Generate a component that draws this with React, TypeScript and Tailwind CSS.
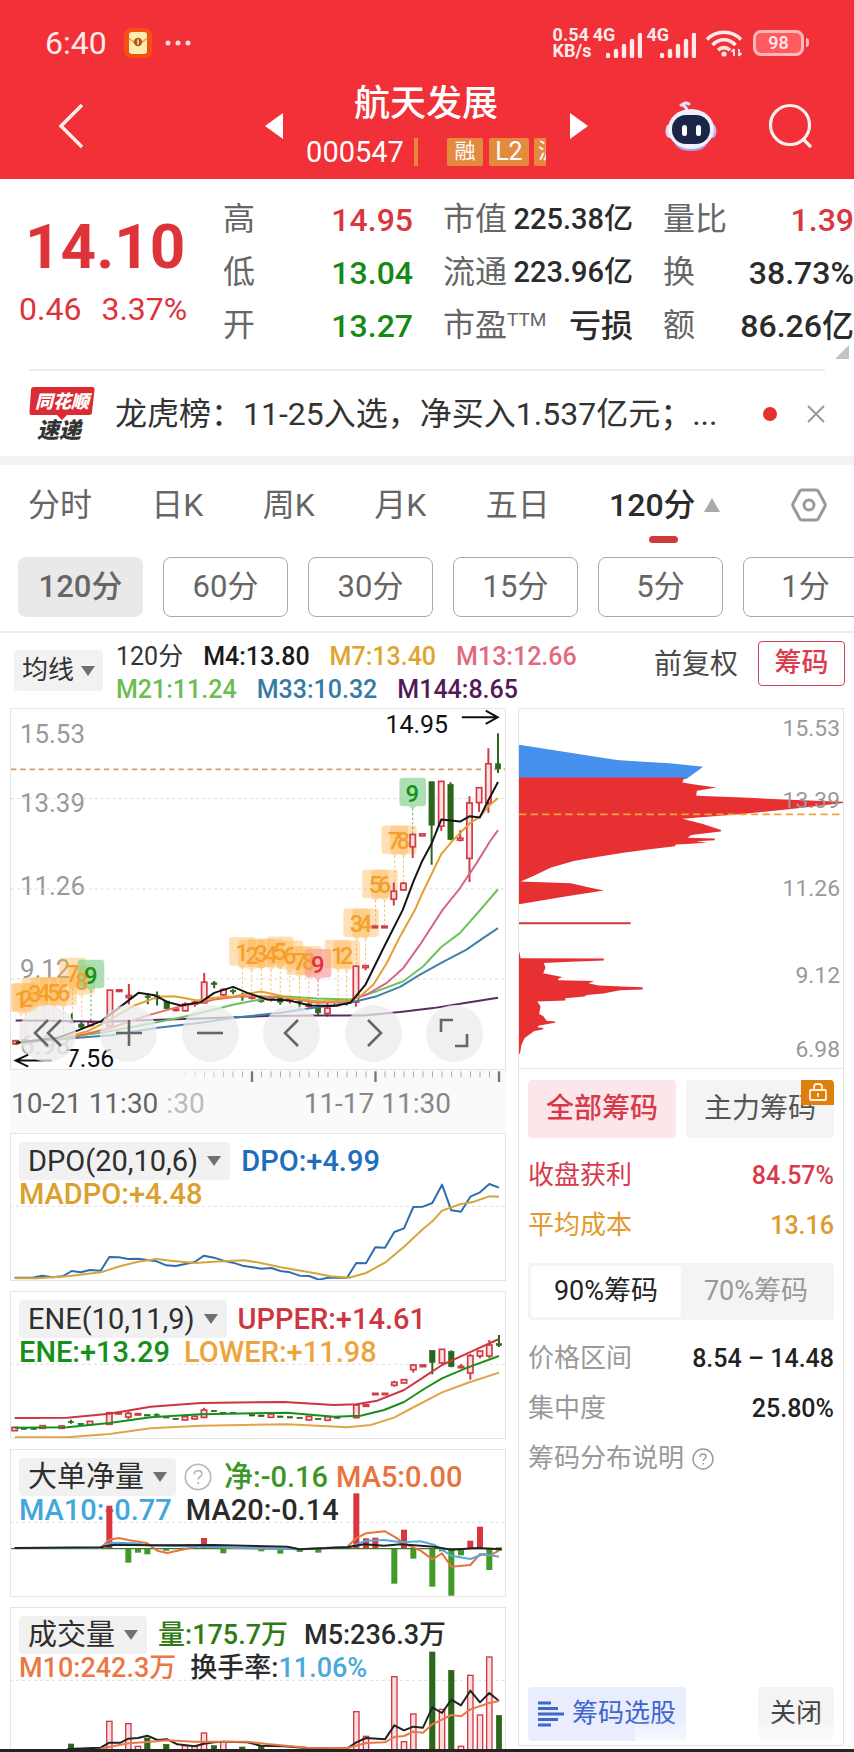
import { ReactNode } from "react";
import clsx from "clsx";

type Candle = {
  x: number;
  high: number;
  low: number;
  top: number;
  bottom: number;
  up: boolean;
};

const c = (
  x: number,
  high: number,
  low: number,
  top: number,
  bottom: number,
  up = true
): Candle => ({ x, high, low, top, bottom, up });

const RED = "#d23a44";
const GREEN = "#2b661c";

const candles: Candle[] = [
  c(42, 1022, 1036, 1024, 1034),
  c(70, 1018, 1030, 1022, 1028),
  c(211, 942, 972, 966, 970, false),
  c(240, 968, 990, 974, 984, false),
  c(268, 960, 982, 968, 978),
  c(326, 872, 980, 872, 980),
  c(354, 871, 876, 871, 876),
  c(383, 853, 915, 888, 894),
  c(440, 882, 914, 890, 894, false),
  c(468, 876, 918, 888, 898, false),
  c(497, 905, 928, 905, 928, false),
  c(525, 928, 936, 929, 933),
  c(553, 908, 936, 914, 934),
  c(582, 904, 922, 908, 914),
  c(610, 820, 912, 848, 910),
  c(640, 844, 866, 850, 855, false),
  c(668, 866, 890, 870, 886),
  c(697, 868, 884, 873, 877, false),
  c(725, 880, 904, 890, 892, false),
  c(754, 886, 900, 892, 896),
  c(782, 888, 910, 898, 906, false),
  c(811, 890, 906, 896, 900),
  c(839, 886, 916, 892, 908, false),
  c(868, 892, 912, 900, 904),
  c(897, 896, 934, 906, 908, false),
  c(925, 900, 926, 914, 920),
  c(953, 918, 950, 926, 940, false),
  c(981, 906, 952, 926, 942),
  c(1010, 902, 922, 908, 918),
  c(1039, 898, 918, 906, 910, false),
  c(1067, 798, 922, 800, 908),
  c(1096, 796, 812, 798, 804),
  c(1124, 679, 684, 679, 684),
  c(1153, 679, 684, 679, 684),
  c(1181, 548, 617, 574, 598),
  c(1210, 546, 572, 550, 570),
  c(1238, 403, 474, 403, 440),
  c(1267, 401, 407, 401, 407),
  c(1295, 244, 494, 244, 375, false),
  c(1324, 243, 392, 243, 378),
  c(1352, 246, 420, 252, 418, false),
  c(1381, 390, 424, 414, 420),
  c(1409, 288, 546, 308, 475),
  c(1438, 262, 335, 262, 307),
  c(1466, 143, 338, 190, 308),
  c(1495, 98, 218, 190, 205, false),
];

const eneCandles: Candle[] = [
  c(42, 427, 437, 427, 437),
  c(70, 429, 433, 429, 433, false),
  c(99, 429, 433, 429, 433, false),
  c(126, 422, 430, 422, 430),
  c(183, 423, 430, 423, 430),
  c(211, 404, 416, 410, 413, false),
  c(240, 415, 419, 415, 419, false),
  c(268, 409, 419, 409, 419),
  c(326, 383, 418, 383, 418),
  c(354, 383, 387, 383, 387),
  c(383, 378, 403, 385, 396),
  c(412, 386, 390, 386, 390),
  c(440, 389, 393, 389, 393, false),
  c(468, 385, 395, 389, 391, false),
  c(497, 395, 399, 395, 399, false),
  c(525, 400, 404, 400, 404, false),
  c(553, 395, 405, 395, 405),
  c(582, 394, 404, 394, 402),
  c(610, 368, 400, 375, 397),
  c(640, 376, 380, 376, 380, false),
  c(668, 382, 387, 382, 387, false),
  c(697, 382, 386, 382, 386, false),
  c(754, 388, 393, 388, 393, false),
  c(782, 390, 395, 390, 395, false),
  c(811, 387, 397, 387, 397),
  c(839, 393, 397, 393, 397, false),
  c(868, 395, 399, 395, 399, false),
  c(897, 397, 401, 397, 401, false),
  c(925, 394, 405, 394, 405),
  c(953, 400, 404, 400, 404, false),
  c(981, 395, 406, 395, 406),
  c(1010, 395, 400, 395, 400, false),
  c(1067, 357, 400, 360, 398),
  c(1096, 359, 364, 359, 364),
  c(1124, 325, 329, 325, 329),
  c(1153, 325, 329, 325, 329),
  c(1181, 287, 305, 292, 301),
  c(1210, 284, 294, 284, 294),
  c(1238, 240, 263, 240, 254),
  c(1267, 240, 245, 240, 245),
  c(1295, 196, 268, 196, 232, false),
  c(1324, 193, 236, 193, 234),
  c(1352, 196, 247, 200, 245, false),
  c(1381, 237, 250, 244, 248),
  c(1409, 207, 284, 212, 264),
  c(1438, 198, 220, 198, 213),
  c(1466, 165, 220, 180, 213),
  c(1495, 150, 186, 176, 181, false),
];

const maLines = [
  { color: "#5b2a66", points: "42,963 150,964 300,967 450,962 600,957 800,950 950,948 1090,948 1200,938 1300,926 1400,910 1495,895" },
  { color: "#3f80ad", points: "42,1030 130,1024 230,1015 330,1008 470,985 600,970 700,955 840,940 940,925 1040,912 1130,890 1200,862 1260,825 1324,790 1400,750 1450,715 1495,685" },
  { color: "#6cc25b", points: "42,1030 150,1018 300,1000 460,970 560,950 700,915 780,900 840,890 950,897 1050,900 1130,875 1210,845 1270,800 1324,742 1380,700 1440,632 1495,568" },
  { color: "#d9648a", points: "950,908 1040,905 1100,885 1160,850 1210,805 1260,735 1328,630 1380,565 1430,490 1470,425 1495,390" },
  { color: "#ec6a5e", points: "42,1030 150,1022 230,1010 330,985 440,948 540,920 610,908 640,900 720,890 840,892 950,910 1040,907" },
  { color: "#e0a22e", points: "42,1030 200,1012 260,995 310,970 400,918 470,892 520,890 590,903 640,895 700,890 780,876 820,884 860,895 950,905 1040,905 1080,890 1120,855 1160,790 1200,710 1245,630 1267,580 1324,462 1360,420 1409,370 1440,350 1466,318 1495,293" },
  { color: "#151515", points: "42,1030 170,1015 230,993 300,965 360,920 412,880 460,887 500,908 540,918 600,908 640,880 697,862 740,880 800,900 860,902 930,918 1000,920 1050,910 1067,890 1096,855 1150,745 1208,630 1240,545 1267,482 1295,430 1324,358 1381,364 1410,348 1440,352 1466,300 1495,245" },
];

type Badge = { n: number; x: number; y: number; end: number; tone?: "green" | "red" };

const badges: Badge[] = [
  { n: 1, x: 58, y: 900, end: 1020 },
  { n: 2, x: 72, y: 898, end: 1020 },
  { n: 3, x: 100, y: 882, end: 1010 },
  { n: 4, x: 127, y: 880, end: 1010 },
  { n: 5, x: 156, y: 880, end: 1005 },
  { n: 6, x: 186, y: 880, end: 1005 },
  { n: 7, x: 213, y: 822, end: 945 },
  { n: 8, x: 241, y: 846, end: 970 },
  { n: 9, x: 269, y: 828, end: 960, tone: "green" },
  { n: 1, x: 725, y: 760, end: 880 },
  { n: 2, x: 753, y: 768, end: 886 },
  { n: 3, x: 782, y: 764, end: 888 },
  { n: 4, x: 811, y: 766, end: 890 },
  { n: 5, x: 839, y: 758, end: 886 },
  { n: 6, x: 868, y: 770, end: 892 },
  { n: 7, x: 897, y: 788, end: 896 },
  { n: 8, x: 925, y: 788, end: 900 },
  { n: 9, x: 953, y: 796, end: 918, tone: "red" },
  { n: 1, x: 1013, y: 768, end: 902 },
  { n: 2, x: 1039, y: 770, end: 898 },
  { n: 3, x: 1069, y: 674, end: 798 },
  { n: 4, x: 1096, y: 674, end: 796 },
  { n: 5, x: 1126, y: 557, end: 679 },
  { n: 6, x: 1153, y: 557, end: 679 },
  { n: 7, x: 1184, y: 424, end: 548 },
  { n: 8, x: 1210, y: 424, end: 546 },
  { n: 9, x: 1238, y: 280, end: 403, tone: "green" },
];

const netBars = [
  [326, 195, 323], [383, 323, 366], [412, 323, 336], [440, 323, 341], [497, 323, 330],
  [610, 292, 323], [668, 323, 338], [782, 323, 332], [839, 323, 339], [897, 323, 334],
  [953, 323, 336], [1067, 158, 323], [1096, 293, 323], [1124, 291, 323], [1181, 323, 429],
  [1210, 267, 323], [1238, 323, 354], [1295, 323, 438], [1324, 323, 332], [1352, 323, 465],
  [1381, 323, 344], [1409, 300, 323], [1438, 258, 323], [1466, 323, 388], [1495, 320, 330],
];

const volumeBars: [number, number, boolean][] = [
  [211, 429, false], [326, 361, true], [383, 368, true], [412, 436, true], [440, 411, false],
  [497, 430, false], [553, 434, true], [582, 436, true], [610, 396, true], [640, 434, false],
  [668, 424, true], [725, 438, false], [782, 436, false], [1067, 332, true], [1096, 406, true],
  [1181, 227, true], [1210, 422, true], [1238, 339, true], [1295, 153, false], [1324, 325, true],
  [1352, 208, false], [1381, 436, true], [1409, 223, true], [1438, 342, true], [1466, 168, true],
  [1495, 343, false],
];

const quote = [
  [
    { label: "高", value: "14.95", color: "text-[#d9363e]" },
    { label: "低", value: "13.04", color: "text-[#148a14]" },
    { label: "开", value: "13.27", color: "text-[#148a14]" },
  ],
  [
    { label: "市值", value: "225.38亿", color: "text-[#2b2b2b]" },
    { label: "流通", value: "223.96亿", color: "text-[#2b2b2b]" },
    { label: "市盈", sup: "TTM", value: "亏损", color: "text-[#2b2b2b]" },
  ],
  [
    { label: "量比", value: "1.39", color: "text-[#d9363e]" },
    { label: "换", value: "38.73%", color: "text-[#2b2b2b]" },
    { label: "额", value: "86.26亿", color: "text-[#2b2b2b]" },
  ],
];

function Candles({ data }: { data: Candle[] }) {
  return (
    <>
      {data.map((d) => (
        <g key={d.x}>
          <path
            d={`M${d.x} ${d.high}V${d.top}M${d.x} ${d.bottom}V${d.low}`}
            stroke={d.up ? RED : GREEN}
            strokeWidth={6}
          />
          <rect
            x={d.x - 8}
            y={d.top}
            width={16}
            height={d.bottom - d.top}
            fill={d.up ? "#fbe0e0" : GREEN}
            stroke={d.up ? RED : GREEN}
            strokeWidth={d.up ? 5 : 2}
          />
        </g>
      ))}
    </>
  );
}

function Line({ points, color }: { points: string; color: string }) {
  return (
    <polyline
      points={points}
      fill="none"
      stroke={color}
      strokeWidth={6}
      strokeLinejoin="round"
    />
  );
}

function Caret({ className }: { className?: string }) {
  return (
    <svg viewBox="0 0 14 10" className={clsx("h-[10px] w-[14px]", className)}>
      <path d="M0 0H14L7 10Z" fill="#707070" />
    </svg>
  );
}

function HelpIcon({ className }: { className: string }) {
  return (
    <svg viewBox="0 0 28 28" fill="none" stroke="currentColor" className={className}>
      <circle cx="14" cy="14" r="12.7" strokeWidth="1.8" />
      <path
        d="M10.2 11.4c0-2.3 1.6-3.8 3.9-3.8s3.8 1.4 3.8 3.4c0 2.6-3.7 2.8-3.7 5.6M14.2 19v2"
        strokeWidth="1.8"
      />
    </svg>
  );
}

function Signal() {
  return (
    <svg viewBox="0 0 36 26" className="h-[26px] w-9" stroke="#ffe9e9" strokeWidth="4.400" strokeLinecap="round">
      <path d="M2 24V23M10 24V19M18 24V14M26 24V9M34 24V3" />
    </svg>
  );
}

function StatusBar() {
  return (
    <div className="flex h-[85px] items-center justify-between pl-[45px] pr-[45px] text-[#ffeaea]">
      <div className="flex items-center">
        <span className="text-[32px]">6:40</span>
        <svg viewBox="0 0 28 30" className="ml-[17px] h-[30px] w-7">
          <rect width="28" height="30" rx="7" fill="#f4500f" />
          <rect x="5" y="4" width="18" height="22" rx="3" fill="#fdebb0" />
          <path d="M5 10q9 10 18 0" fill="none" stroke="#e7a24b" strokeWidth="1.5" />
          <circle cx="14" cy="14" r="4.2" fill="#b8561a" />
          <path d="M14 11.500v5" stroke="#fdebb0" strokeWidth="1.500" />
        </svg>
        <svg viewBox="0 0 26 6" className="ml-[13px] h-[6px] w-[26px]" fill="#ffdcdc">
          <circle cx="3" cy="3" r="2.500" />
          <circle cx="13" cy="3" r="2.500" />
          <circle cx="23" cy="3" r="2.500" />
        </svg>
      </div>
      <div className="flex items-center">
        <div className="text-lg leading-4 font-bold">
          <div>0.54</div>
          <div className="-mr-1">KB/s</div>
        </div>
        <span className="ml-1 self-start text-lg leading-4 font-bold">4G</span>
        <div className="-ml-[9px] pt-[4px]">
          <Signal />
        </div>
        <span className="ml-1 self-start text-lg leading-4 font-bold">4G</span>
        <div className="-ml-[9px] pt-[4px]">
          <Signal />
        </div>
        <svg viewBox="0 0 38 28" className="ml-[9px] h-7 w-[38px]" fill="none" stroke="#ffe9e9" strokeWidth="3.600">
          <path d="M2 10.500C11 .8 27 .8 36 10.500M7.500 16C14 9 24 9 30.500 16M13 21.300c3.500-3.600 8.500-3.600 12 0" />
          <circle cx="19" cy="25" r="2.600" fill="#ffe9e9" stroke="none" />
          <path d="M29 20v7M29 20l-2.500 3M34 27v-7M34 27l2.500-3" strokeWidth="1.800" />
        </svg>
        <div className="ml-[10px] flex items-center">
          <div className="flex h-[26px] w-[51px] items-center justify-center rounded-lg border-3 border-[#ffb9bc] bg-[#ff5a60] text-lg font-medium">
            98
          </div>
          <div className="ml-[2px] h-[9px] w-[3px] rounded-r bg-[#ffb9bc]" />
        </div>
      </div>
    </div>
  );
}

function Robot() {
  return (
    <svg viewBox="0 0 52 50" className="h-[50px] w-[52px]">
      <path d="M22 10q-1-6-6-6M18 3q3-2 6 0" fill="none" stroke="#e9dffb" strokeWidth="3" strokeLinecap="round" />
      <ellipse cx="4.500" cy="30" rx="4" ry="7" fill="#ddd6fa" />
      <ellipse cx="47.500" cy="30" rx="4" ry="7" fill="#c8b4f2" />
      <path d="M9 37q0 13 17 13t17-13Z" fill="#b59cf0" />
      <ellipse cx="26" cy="28" rx="23" ry="20" fill="#f0effc" />
      <rect x="7" y="14" width="38" height="29" rx="14" fill="#1b2547" />
      <rect x="17" y="24" width="5" height="11" rx="2.500" fill="#fff" />
      <rect x="31" y="24" width="5" height="11" rx="2.500" fill="#fff" />
    </svg>
  );
}

function TitleBar() {
  return (
    <div className="flex h-[94px] items-center pr-10 pb-3 pl-[38px]">
      <div className="flex flex-1 items-center justify-between">
        <button aria-label="返回" className="ml-5">
          <svg viewBox="0 0 26 46" className="h-[46px] w-[26px]" fill="none" stroke="#fff0f0" strokeWidth="3.500">
            <path d="M24 2 3 23l21 21" />
          </svg>
        </button>
        <button aria-label="上一只">
          <svg viewBox="0 0 18 26" className="h-[26px] w-[18px]" fill="#fff">
            <path d="M18 0v26L0 13Z" />
          </svg>
        </button>
      </div>
      <div className="flex w-[287px] flex-col items-center gap-2 text-white">
        <h1 className="text-4xl leading-11 font-medium">航天发展</h1>
        <div className="flex items-center">
          <span className="mr-[10px] text-[29px] leading-9">000547</span>
          <span className="mr-[29px] h-7 w-1 bg-[#e48a3f]" />
          <span className="mr-[6px] flex h-7 w-9 items-center justify-center rounded-xs bg-[#e48a3f] text-[21px]">融</span>
          <span className="mr-[5px] flex h-7 w-10 items-center justify-center rounded-xs bg-[#e48a3f] text-[25px]">L2</span>
          <span className="flex h-7 w-3 items-center overflow-hidden rounded-l-xs bg-[#e48a3f] pl-1 text-[21px]">
            沪
          </span>
        </div>
      </div>
      <div className="flex flex-1 items-center justify-between">
        <button aria-label="下一只">
          <svg viewBox="0 0 18 26" className="h-[26px] w-[18px]" fill="#fff">
            <path d="M0 0v26L18 13Z" />
          </svg>
        </button>
        <div className="flex items-center gap-[51px]">
          <button aria-label="助手">
            <Robot />
          </button>
          <button aria-label="搜索">
            <svg viewBox="0 0 46 46" className="h-[46px] w-[46px]" fill="none" stroke="#fff0f0" strokeWidth="3.200">
              <circle cx="22" cy="22" r="19.500" />
              <path d="m35 36 8 8" />
            </svg>
          </button>
        </div>
      </div>
    </div>
  );
}

function QuotePanel() {
  return (
    <section className="relative flex h-[190px] pt-[14px]">
      <div className="w-[223px] shrink-0 pt-3 text-[#dd3339]">
        <div className="pl-[25px] text-[62px] leading-[84px] font-bold">14.10</div>
        <div className="flex gap-5 pl-[19px] text-[32px] leading-10">
          <span>0.46</span>
          <span>3.37%</span>
        </div>
      </div>
      <div className="grid flex-1 grid-cols-[190px_190px_1fr] gap-x-[30px]">
        {quote.map((col, i) => (
          <dl key={i} className="flex flex-col">
            {col.map((item) => (
              <div key={item.label} className="flex h-[53px] items-center justify-between whitespace-nowrap">
                <dt className="flex text-[32px] leading-[53px] text-[#666]">
                  {item.label}
                  {"sup" in item && <span className="text-[19px] leading-[42px]">{item.sup}</span>}
                </dt>
                <dd
                  className={clsx(
                    item.color,
                    i === 1 && !("sup" in item) ? "text-[29px]" : "text-[32px]",
                    "font-medium"
                  )}
                >
                  {item.value}
                </dd>
              </div>
            ))}
          </dl>
        ))}
      </div>
      <svg viewBox="0 0 14 14" className="absolute right-[5px] bottom-[10px] h-[14px] w-[14px]">
        <path d="M14 0v14H0Z" fill="#c4c4c4" />
      </svg>
    </section>
  );
}

function NewsBar() {
  return (
    <section className="mx-[29px] flex h-[87px] items-center border-t-2 border-[#ececec]">
      <svg viewBox="0 0 66 54" className="h-[54px] w-[66px] shrink-0 overflow-visible">
        <path d="M5 0H63q3 0 2.500 3L63 25q0 3-3 3H38l-5 5-5-5H3q-3 0-2.500-3L2 3q0-3 3-3Z" fill="#dc2b33" />
        <text x="6" y="21" fontSize="18" fontWeight="900" fontStyle="italic" fill="#fff">同花顺</text>
        <text x="8" y="51" fontSize="22" fontWeight="900" fontStyle="italic" fill="#333">速递</text>
      </svg>
      <a href="#lhb" className="ml-5 flex-1 whitespace-nowrap text-[32px] text-[#333]">
        龙虎榜：11-25入选，净买入1.537亿元；...
      </a>
      <span className="h-[14px] w-[14px] rounded-full bg-[#e5302f]" />
      <button aria-label="关闭提示" className="ml-[30px]">
        <svg viewBox="0 0 18 18" className="h-[18px] w-[18px]" stroke="#999" strokeWidth="2">
          <path d="m1 1 16 16M17 1 1 17" />
        </svg>
      </button>
    </section>
  );
}

function PeriodTabs() {
  const tabs = ["分时", "日K", "周K", "月K", "五日"];
  const minutes = ["120分", "60分", "30分", "15分", "5分", "1分"];
  return (
    <section className="border-b-2 border-[#ececec]">
      <nav className="flex h-[92px] items-center justify-between pr-[27px] pl-[28px] pb-3 text-[32px] text-[#666]">
        {tabs.map((t) => (
          <button key={t}>{t}</button>
        ))}
        <button className="relative flex items-center gap-2 font-medium text-[#2b2b2b]">
          120分
          <svg viewBox="0 0 16 14" className="h-[14px] w-4" fill="#aaa">
            <path d="M8 0l8 14H0Z" />
          </svg>
          <span className="absolute -bottom-[14px] left-[40px] h-[7px] w-[29px] rounded-full bg-[#cf3a3c]" />
        </button>
        <button aria-label="设置" className="ml-3">
          <svg viewBox="0 0 36 34" className="h-[34px] w-9" fill="none" stroke="#999" strokeWidth="3">
            <path d="M11 2H25q1.500 0 2.300 1.300l6.500 12q.9 1.700 0 3.400l-6.500 12Q26.500 32 25 32H11q-1.500 0-2.300-1.300l-6.500-12q-.9-1.700 0-3.400l6.500-12Q9.500 2 11 2Z" />
            <circle cx="18" cy="17" r="5" />
          </svg>
        </button>
      </nav>
      <div className="flex h-[74px] gap-5 overflow-hidden pl-[18px] text-[31px] text-[#666]">
        {minutes.map((m, i) => (
          <button
            key={m}
            className={clsx(
              "h-[60px] w-[125px] shrink-0 rounded-lg",
              i === 0 ? "bg-[#e9e9e9] font-medium" : "border border-[#a9a9a9]"
            )}
          >
            {m}
          </button>
        ))}
      </div>
    </section>
  );
}

function MaLegend() {
  return (
    <section className="flex h-[75px] items-center pr-[9px] pl-[14px]">
      <button className="flex h-[41px] w-[89px] items-center justify-center gap-[7px] rounded bg-[#f2f2f2] text-[26px] text-[#333]">
        均线
        <Caret />
      </button>
      <div className="ml-[13px] flex-1 pt-1 text-[25px] leading-[33px] font-medium">
        <div className="flex gap-5">
          <span className="font-normal text-[#333]">120分</span>
          <span className="text-[#1a1a1a]">M4:13.80</span>
          <span className="text-[#e2a32c]">M7:13.40</span>
          <span className="text-[#e0697f]">M13:12.66</span>
        </div>
        <div className="flex gap-5">
          <span className="text-[#6cbc52]">M21:11.24</span>
          <span className="text-[#377aa6]">M33:10.32</span>
          <span className="text-[#52195a]">M144:8.65</span>
        </div>
      </div>
      <div className="flex items-end gap-5 self-start pt-2">
        <button className="text-[28px] text-[#4a4a4a]">前复权</button>
        <button className="h-[45px] w-[87px] rounded border border-[#cf4458] text-[27px] font-medium text-[#dc3c4f]">
          筹码
        </button>
      </div>
    </section>
  );
}

const badgeTone = {
  green: { fill: "#7fd089", text: "#169216" },
  red: { fill: "#f79a9a", text: "#e2313a" },
  orange: { fill: "#ffb650", text: "#f3a12c" },
};

function PriceChart() {
  return (
    <div className="relative border border-[#e4e4e4]">
      <svg viewBox="0 0 496 361" className="block w-full">
        <g fill="#999" fontSize="26">
          <text x="9" y="34">15.53</text>
          <text x="9" y="103">13.39</text>
          <text x="9" y="187">11.26</text>
          <text x="9" y="270">9.12</text>
          <text x="9" y="346" opacity="0.8">6.98</text>
        </g>
        <g transform="scale(0.333333) translate(-28 -25)">
          <path d="M28 295H1516M28 567H1516M28 838H1516" stroke="#ddd" strokeWidth="3" strokeDasharray="9 9" />
          <path d="M28 207H1516" stroke="#cda070" strokeWidth="5" strokeDasharray="16 12" />
          {badges.map((b, i) => {
            const tone = badgeTone[b.tone ?? "orange"];
            return (
              <g key={i}>
                <path
                  d={`M${b.x} ${b.y + 44}V${b.end}`}
                  stroke={tone.text}
                  strokeWidth="3"
                  strokeDasharray="7 7"
                  opacity="0.7"
                />
                <path
                  d={`M${b.x - 30} ${b.y - 48}h60q10 0 10 10v66q0 10-10 10h-18l-12 8-12-8h-18q-10 0-10-10v-66q0-10 10-10Z`}
                  fill={tone.fill}
                  opacity={b.tone ? 0.65 : 0.42}
                />
              </g>
            );
          })}
          <Candles data={candles} />
          {maLines.map((l, i) => (
            <Line key={i} {...l} />
          ))}
          <path d="M1386 50H1494M1458 30l36 20-36 20" fill="none" stroke="#111" strokeWidth="6" />
          <path d="M150 1084H42M80 1066l-38 18 38 18" fill="none" stroke="#111" strokeWidth="6" />
        </g>
        <g fontSize="24" fontWeight="500" textAnchor="middle">
          {badges.map((b, i) => (
            <text
              key={i}
              x={Math.round((b.x - 28) / 3)}
              y={Math.round((b.y - 25) / 3) + 8}
              fill={badgeTone[b.tone ?? "orange"].text}
            >
              {b.n}
            </text>
          ))}
        </g>
        <text x="376" y="24" fontSize="25" fill="#111">14.95</text>
        <text x="55" y="359" fontSize="25" fill="#111">7.56</text>
      </svg>
      <div className="absolute right-[22px] bottom-[7px] left-2 flex justify-between">
        {chartTools.map((t) => (
          <button
            key={t.label}
            aria-label={t.label}
            className="flex h-[57px] w-[57px] items-center justify-center rounded-full bg-[#ebebeb]/75"
          >
            <svg viewBox="0 0 30 30" className="h-[30px] w-[30px]" fill="none" stroke="#666" strokeWidth="2.600">
              <path d={t.d} />
            </svg>
          </button>
        ))}
      </div>
    </div>
  );
}

const chartTools = [
  { label: "最早", d: "M15 2 2 15l13 13M28 2 15 15l13 13" },
  { label: "放大", d: "M15 2V28M2 15H28" },
  { label: "缩小", d: "M2 15H28" },
  { label: "向左", d: "M21 2 8 15l13 13" },
  { label: "向右", d: "M10 2l13 13-13 13" },
  { label: "全屏", d: "M2 14V2H14M28 16V28H16" },
];

function TimeAxis() {
  const ticks = Array.from({ length: 35 }, (_, i) => 1495 - i * 28.5);
  return (
    <div className="relative h-[63px] bg-[#fafafa]">
      <svg viewBox="0 0 496 14" className="block w-full">
        <g transform="scale(0.333333) translate(-28 0)">
          {ticks.map((x, i) => (
            <path
              key={x}
              d={i % 13 === 0 ? `M${x} 4V36` : `M${x} 4V22`}
              stroke={i % 13 === 0 ? "#777" : "#aaa"}
              strokeWidth={i % 13 === 0 ? 7 : 3}
              opacity={i > 26 ? (35 - i) / 9 : 1}
            />
          ))}
        </g>
      </svg>
      <div className="flex px-[1px] text-[28px] leading-10 text-[#666]">
        <span>10-21 11:30</span>
        <span className="ml-2 text-[#bbb]">:30</span>
        <span className="mr-[54px] ml-auto text-[#888]">11-17 11:30</span>
      </div>
    </div>
  );
}

function Indicator({
  name,
  help,
  first,
  second,
  children,
  offset,
  last,
}: {
  name: string;
  help?: boolean;
  first: ReactNode;
  second: ReactNode;
  children: ReactNode;
  offset: number;
  last?: boolean;
}) {
  return (
    <section
      className={clsx(
        "relative overflow-hidden border border-[#e4e4e4]",
        last ? "h-[142px] border-b-0" : "mb-[10px] h-[148px]"
      )}
    >
      <div className="px-2 pt-2 leading-7 font-medium whitespace-nowrap">
        <div className={clsx("flex h-[38px] items-center", help ? "gap-2" : "gap-[11px]", last ? "text-[27px]" : "text-[29px]")}>
          <button className="flex h-[38px] items-center gap-[9px] rounded bg-[#f1f1f1] px-[9px] text-[29px] font-normal text-[#2e2e2e]">
            {name}
            <Caret />
          </button>
          {help && <HelpIcon className="h-7 w-7 text-[#bbb]" />}
          {first}
        </div>
        <div className={clsx("flex gap-[14px]", last ? "text-[27px]" : "text-[29px]")}>{second}</div>
      </div>
      <svg viewBox="0 0 496 147" className="absolute -top-px -left-px h-[147px] w-[calc(100%+2px)]" preserveAspectRatio="none">
        <g transform={`scale(0.333333) translate(-28 ${-offset})`}>
          <path
            d={`M28 ${offset + 220}H1516`}
            stroke="#ddd"
            strokeWidth="3"
            strokeDasharray="9 9"
          />
          {children}
        </g>
      </svg>
    </section>
  );
}

function ChipChart() {
  return (
    <div className="border-b border-[#e4e4e4]">
      <svg viewBox="0 0 326 361" className="block w-full">
        <g transform="scale(0.333333) translate(-25 -25)">
          <path d="M25 133 160 154 320 179 400 184 480 189 581 199 530 236H25Z" fill="#4690ee" />
          <path
            d="M25 232H524L518 247 560 254 621 262 562 272 560 287 700 292 860 300 1003 305V309L860 325 700 342 518 356 580 372 635 390 634 395 545 405 534 414 616 416 616 421 560 424 592 428 545 432 498 434 496 439 420 448 340 459 260 472 190 484 120 504 70 528 30 546 182 551 230 562 281 573 160 592 25 614Z"
            fill="#e63032"
          />
          <path d="M25 669H362V675H25Z" fill="#d2353b" />
          <path
            d="M25 755 30 777 281 778 281 784 180 788 100 792 105 806 98 823 155 834 142 841 145 844 252 846 235 853 265 860 334 863 398 865 398 872 330 874 280 884 230 888 222 893 165 898 165 905 80 908 90 922 86 946 98 952 108 966 134 968 134 972 86 980 80 986 98 988 98 992 70 998 42 1018 32 1040 28 1066H25Z"
            fill="#e63032"
          />
          <path d="M25 343H1003" stroke="#f0a53c" strokeWidth="5" strokeDasharray="22 13" />
        </g>
        <g fill="#999" fontSize="23" textAnchor="end">
          <text x="323" y="27">15.53</text>
          <text x="323" y="100">13.39</text>
          <text x="323" y="188">11.26</text>
          <text x="323" y="276">9.12</text>
          <text x="323" y="350">6.98</text>
        </g>
      </svg>
    </div>
  );
}

function ChipRow({ label, value, tone }: { label: string; value: string; tone: string }) {
  return (
    <div className={clsx("flex h-[50px] items-center justify-between", tone)}>
      <dt>{label}</dt>
      <dd className={clsx("text-[25px] font-medium", tone === "text-[#999]" && "text-[#222]")}>{value}</dd>
    </div>
  );
}

function ChipPanel() {
  return (
    <aside className="relative flex flex-1 flex-col border border-[#e4e4e4]">
      <ChipChart />
      <div className="flex flex-1 flex-col px-[9px] pt-[11px] text-[26px]">
        <div className="grid grid-cols-2 gap-[10px] text-[28px]">
          <button className="h-[58px] rounded bg-[#fde6e9] font-medium text-[#d83a4b]">全部筹码</button>
          <button className="relative h-[58px] rounded bg-[#f4f4f4] text-[#555]">
            主力筹码
            <span className="absolute top-0 right-0 flex h-[25px] w-[33px] items-center justify-center rounded-tr bg-[#e07f0e]">
              <svg viewBox="0 0 20 20" className="h-5 w-5" fill="none" stroke="#fff3dc" strokeWidth="1.800">
                <rect x="2" y="8" width="16" height="10" rx="1" />
                <path d="M6 8V5q0-3 3-3h2q3 0 3 3v3M10 11v4" />
              </svg>
            </span>
          </button>
        </div>
        <dl className="pt-[13px]">
          <ChipRow label="收盘获利" value="84.57%" tone="text-[#d83a4b]" />
          <ChipRow label="平均成本" value="13.16" tone="text-[#e09a2b]" />
        </dl>
        <div className="mt-3 grid h-[57px] grid-cols-2 rounded bg-[#f4f4f4] p-[3px] text-[27px]">
          <button className="rounded-sm bg-white text-[#222]">90%筹码</button>
          <button className="text-[#999]">70%筹码</button>
        </div>
        <dl className="pt-[14px]">
          <ChipRow label="价格区间" value="8.54 – 14.48" tone="text-[#999]" />
          <ChipRow label="集中度" value="25.80%" tone="text-[#999]" />
        </dl>
        <a href="#help" className="flex h-[50px] items-center gap-2 text-[#999]">
          筹码分布说明
          <HelpIcon className="h-[22px] w-[22px]" />
        </a>
        <div className="mt-auto mb-1 flex justify-between">
          <button className="flex h-[54px] items-center gap-2 rounded bg-[#e9edfd] px-[10px] text-[#3f66cc]">
            <svg viewBox="0 0 26 26" className="h-[26px] w-[26px]" stroke="#3f66cc" strokeWidth="3">
              <path d="M0 2H13M0 7.500H20M0 13H26M0 18.500H20M0 24H13" />
            </svg>
            筹码选股
          </button>
          <button className="h-[54px] rounded bg-[#f4f4f4] px-3 text-[#444]">关闭</button>
        </div>
      </div>
      <div className="pointer-events-none absolute right-0 bottom-0 h-6 w-[208px] bg-linear-to-b from-white/10 to-white/80" />
    </aside>
  );
}

export default function App() {
  return (
    <div className="w-full overflow-hidden bg-white font-[Roboto,'Noto_Sans_CJK_SC',sans-serif]">
      <header className="bg-[#f13038]">
        <StatusBar />
        <TitleBar />
      </header>
      <QuotePanel />
      <NewsBar />
      <div className="h-[9px] bg-[#f3f3f3]" />
      <PeriodTabs />
      <MaLegend />

      <main className="grid grid-cols-[496fr_326fr] gap-3 px-[10px]">
        <div className="min-w-0">
          <PriceChart />
          <TimeAxis />

          <Indicator
            name="DPO(20,10,6)"
            offset={25}
            first={<span className="text-[#1f6dbd]">DPO:+4.99</span>}
            second={<span className="text-[#dba02e]">MADPO:+4.48</span>}
          >
            <Line
              color="#2d6fae"
              points="42,459 95,459 125,453 155,458 186,455 213,439 240,443 268,436 300,438 326,397 354,398 383,403 412,402 468,410 497,422 525,424 582,412 610,393 640,399 668,408 697,414 725,423 782,432 812,430 839,439 868,443 897,453 925,454 955,465 981,459 1039,459 1067,415 1096,416 1124,368 1153,369 1181,322 1210,311 1238,247 1267,246 1295,235 1324,180 1352,257 1381,261 1409,216 1438,203 1466,178 1495,189"
            />
            <Line
              color="#d4a63c"
              points="42,461 110,461 200,455 300,443 360,424 412,411 468,403 510,408 582,415 640,411 730,407 770,413 840,428 940,445 990,455 1045,459 1096,445 1153,414 1210,366 1267,313 1295,290 1324,258 1381,238 1420,231 1466,215 1495,216"
            />
          </Indicator>

          <Indicator
            name="ENE(10,11,9)"
            offset={18}
            first={<span className="text-[#cc3640]">UPPER:+14.61</span>}
            second={
              <>
                <span className="text-[#16901a]">ENE:+13.29</span>
                <span className="text-[#eaa63c]">LOWER:+11.98</span>
              </>
            }
          >
            <Candles data={eneCandles} />
            <Line color="#cc3640" points="42,399 200,398 326,386 450,365 600,354 850,351 1000,360 1067,358 1130,347 1210,315 1267,278 1324,240 1400,205 1495,162" />
            <Line color="#16901a" points="42,428 200,427 326,414 450,397 600,388 860,383 1000,395 1080,392 1150,375 1210,351 1270,312 1324,280 1400,248 1495,213" />
            <Line color="#dfa548" points="42,457 200,457 326,447 450,430 600,422 860,418 1040,427 1110,420 1180,398 1240,366 1324,322 1400,294 1495,263" />
          </Indicator>

          <Indicator
            name="大单净量"
            help
            offset={25}
            first={
              <div className="flex gap-2 pl-1">
                <span className="text-[#3c9626]">净:-0.16</span>
                <span className="text-[#e9733c]">MA5:0.00</span>
              </div>
            }
            second={
              <>
                <span className="text-[#43a6dc]">MA10:-0.77</span>
                <span className="text-[#2b2b2b]">MA20:-0.14</span>
              </>
            }
          >
            {netBars.map(([x, top, bottom]) => (
              <rect
                key={x}
                x={x - 9}
                y={top}
                width={18}
                height={bottom - top}
                fill={bottom === 323 ? "#d9363e" : "#3f9a27"}
              />
            ))}
            <path d="M28 324H1502" stroke="#3f7a27" strokeWidth="4" />
            <Line color="#e9733c" points="42,322 300,321 326,297 354,292 383,298 440,308 470,330 500,337 540,328 600,315 700,322 900,326 1040,318 1067,292 1096,278 1153,272 1181,288 1210,308 1260,330 1295,356 1324,338 1352,378 1409,373 1438,340 1466,345 1495,330" />
            <Line color="#55aadd" points="42,322 300,321 330,306 400,308 440,314 600,318 900,326 1050,318 1096,300 1153,298 1200,305 1260,302 1300,312 1352,345 1409,355 1450,340 1495,348" />
            <Line color="#222" points="42,322 300,320 340,312 460,314 640,313 860,318 897,326 1040,320 1090,311 1150,315 1200,311 1300,318 1352,327 1430,322 1502,326" />
          </Indicator>

          <Indicator
            name="成交量"
            last
            offset={18}
            first={
              <div className="flex gap-4">
                <span className="text-[#2f7a12]">量:175.7万</span>
                <span className="text-[#2b2b2b]">M5:236.3万</span>
              </div>
            }
            second={
              <>
                <span className="text-[#ea7846]">M10:242.3万</span>
                <span className="text-[#2b2b2b]">
                  换手率:<span className="text-[#4aa8dc]">11.06%</span>
                </span>
              </>
            }
          >
            {volumeBars.map(([x, top, up]) => (
              <rect
                key={x}
                x={x - 8}
                y={top}
                width={16}
                height={460 - top}
                fill={up ? "#fbdfe0" : GREEN}
                stroke={up ? RED : GREEN}
                strokeWidth={up ? 4 : 2}
              />
            ))}
            <Line color="#222" points="200,444 300,440 326,425 360,425 383,413 412,411 440,404 470,417 500,415 530,430 582,436 610,428 640,424 668,422 740,424 780,434 850,436 930,442 1040,442 1067,424 1096,411 1153,415 1181,373 1210,388 1238,377 1267,380 1295,319 1324,336 1352,296 1381,313 1409,269 1438,304 1466,276 1495,300" />
            <Line color="#ea7846" points="300,443 383,427 440,423 500,418 582,422 740,422 800,429 920,440 1040,441 1096,426 1153,424 1181,408 1210,405 1238,392 1267,395 1295,370 1324,356 1352,342 1381,346 1409,325 1466,306 1495,300" />
          </Indicator>
        </div>

        <div className="flex pb-[3px]">
          <ChipPanel />
        </div>
      </main>
      <footer className="h-[5px] bg-[#262224]" />
    </div>
  );
}
